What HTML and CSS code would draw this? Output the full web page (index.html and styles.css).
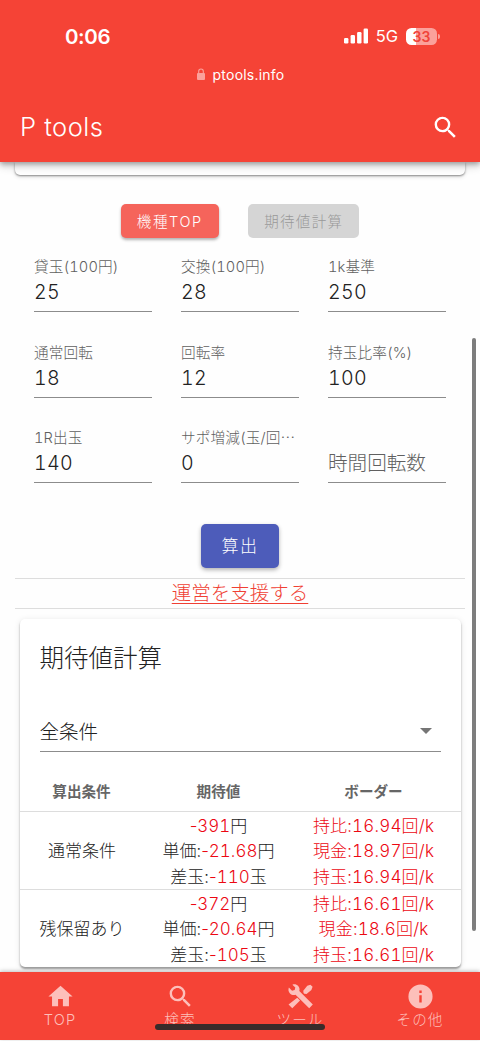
FILE: index.html
```
<!DOCTYPE html>
<html lang="ja">
<head>
<meta charset="utf-8">
<title>P tools</title>
<link rel="stylesheet" href="styles.css">
</head>
<body>
<div class="screen">
  <header class="header">
    <div class="status">
      <span class="clock">0:06</span>
      <div class="indicators">
        <svg class="signal" viewBox="0 0 24 16"><rect x="0" y="10" width="4.4" height="5.5" rx="1.2"/><rect x="6.6" y="7" width="4.4" height="8.5" rx="1.2"/><rect x="13.1" y="4" width="4.4" height="11.5" rx="1.2"/><rect x="19.6" y="0.5" width="4.4" height="15" rx="1.2"/></svg>
        <span class="network">5G</span>
        <span class="battery"><span class="level">33</span><i class="cap"></i></span>
      </div>
    </div>
    <div class="address">
      <svg class="lock" viewBox="0 0 8 12"><rect y="5" width="8" height="7" rx="1"/><path d="M1.7 5.5V3.3a2.3 2.3 0 0 1 4.6 0v2.2" fill="none" stroke="currentColor" stroke-width="1.1"/></svg>
      <span>ptools.info</span>
    </div>
    <div class="appbar">
      <h1 class="brand">P tools</h1>
      <svg class="find" viewBox="0 0 24 24"><path d="M15.5 14h-.79l-.28-.27A6.47 6.47 0 0 0 16 9.5 6.5 6.5 0 1 0 9.5 16c1.61 0 3.09-.59 4.23-1.57l.27.28v.79l5 4.99L20.49 19l-4.99-5zm-6 0C7.01 14 5 11.99 5 9.5S7.01 5 9.5 5 14 7.01 14 9.5 11.99 14 9.5 14z"/></svg>
    </div>
  </header>

  <main class="content">
    <div class="panel-end"></div>
    <div class="tabs">
      <button class="btn btn-red">機種TOP</button>
      <button class="btn btn-off">期待値計算</button>
    </div>
    <form class="fields">
      <div class="field"><label>貸玉(100円)</label><span class="value">25</span></div>
      <div class="field"><label>交換(100円)</label><span class="value">28</span></div>
      <div class="field"><label>1k基準</label><span class="value">250</span></div>
      <div class="field"><label>通常回転</label><span class="value">18</span></div>
      <div class="field"><label>回転率</label><span class="value">12</span></div>
      <div class="field"><label>持玉比率(%)</label><span class="value">100</span></div>
      <div class="field"><label>1R出玉</label><span class="value">140</span></div>
      <div class="field"><label>サポ増減(玉/回⋯</label><span class="value">0</span></div>
      <div class="field"><label></label><span class="value placeholder">時間回転数</span></div>
    </form>
    <button class="btn btn-submit">算出</button>
    <div class="support"><a class="support-link">運営を支援する</a></div>

    <section class="card">
      <h2 class="card-title">期待値計算</h2>
      <div class="select"><span>全条件</span><i class="arrow"></i></div>
      <div class="table">
        <div class="row head"><div>算出条件</div><div>期待値</div><div class="border-head">ボーダー</div></div>
        <div class="row">
          <div class="name">通常条件</div>
          <div class="figures"><p><b><span class="minus">-</span>391</b>円</p><p>単価:<b><span class="minus">-</span>21.68</b>円</p><p>差玉:<b><span class="minus">-</span>110</b>玉</p></div>
          <div class="figures red"><p>持比:16.94回/k</p><p>現金:18.97回/k</p><p>持玉:16.94回/k</p></div>
        </div>
        <div class="row">
          <div class="name">残保留あり</div>
          <div class="figures"><p><b><span class="minus">-</span>372</b>円</p><p>単価:<b><span class="minus">-</span>20.64</b>円</p><p>差玉:<b><span class="minus">-</span>105</b>玉</p></div>
          <div class="figures red"><p>持比:16.61回/k</p><p>現金:18.6回/k</p><p>持玉:16.61回/k</p></div>
        </div>
      </div>
    </section>
  </main>

  <nav class="nav">
    <div class="nav-item"><svg viewBox="0 0 24 24"><path d="M10 20v-6h4v6h5v-8h3L12 3 2 12h3v8z"/></svg><span>TOP</span></div>
    <div class="nav-item"><svg viewBox="0 0 24 24"><path d="M15.5 14h-.79l-.28-.27A6.47 6.47 0 0 0 16 9.5 6.5 6.5 0 1 0 9.5 16c1.61 0 3.09-.59 4.23-1.57l.27.28v.79l5 4.99L20.49 19l-4.99-5zm-6 0C7.01 14 5 11.99 5 9.5S7.01 5 9.5 5 14 7.01 14 9.5 11.99 14 9.5 14z"/></svg><span>検索</span></div>
    <div class="nav-item"><svg viewBox="0 0 24 24"><path d="M2.400 4.600 5 7.200 7.200 6.700 7.700 4.500 5.300 2.200C7 1.600 8.900 2 10.100 3.300 11.200 4.500 11.500 6 11 7.500L22.200 18.700 19.200 21.800 7.900 10.600C6.300 11.200 4.500 10.700 3.300 9.500 2 8.200 1.700 6.300 2.400 4.600zM14.500 9.200 14.300 7.200 17.600 3.200 20.200 2.200 22 4 21 6.700 17 10 15.100 9.700zM9.300 13 11.600 15.300 5.200 21.800 2.100 18.700z"/></svg><span>ツール</span></div>
    <div class="nav-item"><svg viewBox="0 0 24 24"><path d="M12 2a10 10 0 1 0 0 20 10 10 0 0 0 0-20zm1 15h-2v-6h2zm0-8h-2V7h2z"/></svg><span>その他</span></div>
    <i class="home-bar"></i>
  </nav>
  <i class="scrollbar"></i>
</div>
</body>
</html>
```
FILE: styles.css
```
* { box-sizing: border-box; }
body {
  margin: 0;
  background: #fefefe;
  color: #222;
  font-family: Inter, "Noto Sans CJK JP", sans-serif;
  font-weight: 300;
}
h1, h2, p { margin: 0; font-weight: inherit; }
svg { display: block; fill: currentColor; }
.screen {
  position: relative;
  display: flex;
  flex-direction: column;
  width: 480px;
  height: 1041px;
  overflow: hidden;
}

.header {
  position: relative;
  z-index: 2;
  display: flex;
  flex-direction: column;
  flex: none;
  height: 162px;
  background: #f54336;
  color: #fff;
  box-shadow: 0 2px 5px rgba(0,0,0,.3), 0 5px 8px rgba(0,0,0,.14);
}
.status { display: flex; justify-content: space-between; align-items: center; height: 36px; margin-top: 18px; padding: 0 43px 0 65px; }
.clock { font-size: 20.5px; font-weight: 600; letter-spacing: -.4px; }
.indicators { display: flex; align-items: center; }
.signal { width: 24px; height: 16px; }
.network { margin-left: 8px; font-size: 16.5px; font-weight: 400; }
.battery { position: relative; margin-left: 8px; width: 31px; height: 17px; border-radius: 5.5px; background: linear-gradient(90deg, #fff 33%, #fba19b 33%); }
.level { display: block; color: #f0443a; font-size: 14px; font-weight: 600; line-height: 17px; text-align: center; }
.cap { position: absolute; right: -3px; top: 6px; width: 2px; height: 5px; border-radius: 0 2px 2px 0; background: #fba19b; }
.address { display: flex; justify-content: center; align-items: center; gap: 8px; height: 42px; padding: 0 0 2px 1px; font-size: 14px; font-weight: 400; letter-spacing: .22px; }
.lock { width: 8px; height: 12px; color: #fba19b; }
.appbar { display: flex; justify-content: space-between; align-items: center; height: 62px; padding: 0 20px; }
.brand { padding-bottom: 2px; font-size: 25.5px; letter-spacing: .5px; }
.find { width: 29px; height: 29px; }

.content { display: flex; flex-direction: column; align-items: center; }
.panel-end { width: 450px; height: 12.5px; background: #fff; border-radius: 0 0 5px 5px; box-shadow: 0 1px 2px rgba(0,0,0,.4), 0 2px 4px rgba(0,0,0,.12); }
.tabs { display: flex; gap: 29.5px; margin-top: 29.5px; }
.btn { border: 0; padding: 0 0 2px; border-radius: 5px; font-family: inherit; font-weight: 300; white-space: nowrap; }
.btn-red { width: 98px; height: 34px; background: #f5645b; color: #fff; font-size: 14.5px; letter-spacing: 1.6px; box-shadow: 0 2px 3px rgba(0,0,0,.3); }
.btn-off { width: 111px; height: 34px; background: #d5d5d5; color: #999; font-size: 14.5px; letter-spacing: 1.3px; }

.fields { display: grid; grid-template-columns: repeat(3, 118px); column-gap: 29px; row-gap: 28.5px; margin-top: 17px; }
.field { display: flex; flex-direction: column; height: 57px; border-bottom: 1px solid #8c8c8c; }
.field label { height: 24px; padding-top: 1px; color: #606060; font-size: 14.65px; line-height: 22px; letter-spacing: .1px; white-space: nowrap; font-variant-numeric: tabular-nums; }
.value { font-size: 19.6px; line-height: 27px; font-variant-numeric: tabular-nums; letter-spacing: .3px; }
.placeholder { color: #606060; letter-spacing: 0; }

.btn-submit { width: 78px; height: 44px; margin-top: 41px; padding-bottom: 4px; background: #4d5cba; color: #fff; font-size: 17px; letter-spacing: 1.5px; box-shadow: 0 2px 4px rgba(0,0,0,.3); }
.support { width: 450px; height: 31px; margin-top: 9.5px; border-top: 1px solid #ddd; border-bottom: 1px solid #ddd; text-align: center; }
.support-link { color: #f03f33; font-size: 19.5px; line-height: 29px; text-decoration: underline; text-underline-offset: 3px; text-decoration-thickness: 1px; }

.card { width: 441px; height: 348px; margin-top: 10px; background: #fff; border-radius: 5px; box-shadow: 0 2px 2px rgba(0,0,0,.35), 0 1px 6px rgba(0,0,0,.1); overflow: hidden; }
.card-title { padding: 21px 20px 0; font-size: 24.5px; line-height: 36px; }
.select { display: flex; justify-content: space-between; align-items: center; height: 40px; margin: 36px 20px 0; padding: 0 9px 1px 0; border-bottom: 1px solid #8c8c8c; font-size: 19.5px; }
.arrow { border: 6px solid transparent; border-top-color: #757575; border-bottom: 0; }
.table { margin-top: 20px; }
.row { display: grid; grid-template-columns: 124px 150px 167px; align-items: center; height: 78px; border-top: 1px solid #ddd; text-align: center; font-size: 17px; line-height: 25.7px; font-variant-numeric: tabular-nums; }
.row .name { padding: 2px 0 0 1px; }
.row .figures { padding-top: 2px; }
.row b { font-weight: inherit; color: #ec0712; }
.minus { font-variant-numeric: normal; }
.row .figures.red { padding-right: 7px; color: #ec0712; letter-spacing: .2px; }
.row.head { height: 39px; padding-top: 3px; border: 0; color: #666; font-size: 14.6px; font-weight: 700; }
.row.head .border-head { padding-right: 7px; }

.nav { position: absolute; left: 0; bottom: 1px; z-index: 3; width: 480px; height: 68px; display: grid; grid-template-columns: repeat(4, 1fr); background: #f54336; color: #fdbfba; box-shadow: 0 -1px 4px rgba(0,0,0,.25); }
.nav-item { display: flex; flex-direction: column; align-items: center; padding-top: 10px; }
.nav-item svg { width: 29px; height: 29px; }
.nav-item span { font-size: 14.6px; line-height: 18px; letter-spacing: 1.1px; }
.home-bar { position: absolute; left: 155px; top: 52px; width: 170px; height: 6px; border-radius: 3px; background: #392b2a; }
.scrollbar { position: absolute; right: 4px; top: 338px; width: 4px; height: 593px; border-radius: 2px; background: #7d7d7d; }
```
